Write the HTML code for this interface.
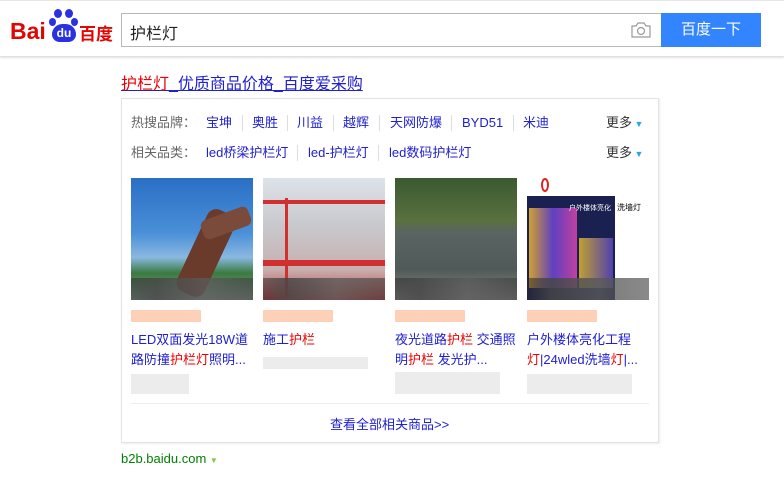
<!DOCTYPE html>
<html><head><meta charset="utf-8"><style>
*{margin:0;padding:0;box-sizing:border-box}
body{width:784px;height:477px;background:#fff;font-family:"Liberation Sans","Noto Sans CJK SC",sans-serif;position:relative;overflow:hidden;font-size:13px}
.hdr{position:absolute;left:0;top:0;width:784px;height:57px;border-top:1px solid #e6e6e6;border-bottom:1px solid #e0e0e0;box-shadow:0 1px 2px rgba(0,0,0,.12)}
.a{position:absolute;white-space:nowrap}
a{color:#2020d0;text-decoration:none;position:absolute;white-space:nowrap;line-height:18px;height:18px}
.red{color:#e00}
.img{position:absolute;top:178px;width:122px;height:122px;overflow:hidden}
.blur{position:absolute;left:0;top:100px;width:122px;height:22px;background:linear-gradient(90deg,rgba(40,40,40,.5),rgba(70,70,70,.85) 20%,rgba(90,90,90,.8) 60%,rgba(60,60,60,.6))}
.pk{position:absolute;top:310px;width:70px;height:12px;background:#ffd0b8}
.gr{position:absolute;height:20px;background:#ececec}
.t{position:absolute;top:330px;width:122px;font-size:13px;line-height:20px;color:#2020d0}
.s{position:absolute;width:1px;height:16px;background:#ddd}
</style></head><body>
<div class="hdr"></div>
<div class="a" style="left:10px;top:18px;font-size:23px;font-weight:bold;color:#e10602">Bai</div>
<div class="a" style="left:49px;top:9px;width:30px;height:34px">
<div class="a" style="left:5px;top:0;width:8px;height:9px;border-radius:50%;background:#2932e1"></div>
<div class="a" style="left:16px;top:0;width:8px;height:9px;border-radius:50%;background:#2932e1"></div>
<div class="a" style="left:0;top:9px;width:7px;height:8px;border-radius:50%;background:#2932e1"></div>
<div class="a" style="left:22px;top:9px;width:7px;height:8px;border-radius:50%;background:#2932e1"></div>
<div class="a" style="left:3px;top:15px;width:24px;height:18px;border-radius:11px 11px 8px 8px;background:#2932e1;color:#fff;font-size:12px;font-weight:bold;text-align:center;line-height:18px">du</div>
</div>
<div class="a" style="left:79px;top:20px;font-size:17px;font-weight:bold;color:#e10602">百度</div>
<div class="a" style="left:121px;top:13px;width:540px;height:34px;border:1px solid #b8b8b8;border-right:none"></div>
<div class="a" style="left:130px;top:20px;font-size:16px;color:#222">护栏灯</div>
<svg class="a" style="left:631px;top:22px" width="20" height="16" viewBox="0 0 20 16"><path d="M1 4h4l2-3h6l2 3h4v11H1z" fill="none" stroke="#9a9a9a" stroke-width="1.2"/><circle cx="10" cy="9" r="3.5" fill="none" stroke="#9a9a9a" stroke-width="1.2"/></svg>
<div class="a" style="left:661px;top:13px;width:100px;height:34px;background:#3385ff;color:#fff;font-size:15px;text-align:center;line-height:34px">百度一下</div>
<div class="a" style="left:121px;top:70px;font-size:16px;text-decoration:underline;color:#2020d0"><span class="red">护栏灯</span>_优质商品价格_百度爱采购</div>
<div class="a" style="left:121px;top:98px;width:538px;height:345px;border:1px solid #e3e3e3;box-shadow:1px 1px 2px rgba(0,0,0,.08)"></div>
<div class="a" style="left:131px;top:114px;color:#666;line-height:18px">热搜品牌：</div>
<a style="left:206px;top:114px">宝坤</a><div class="s" style="left:242px;top:115px"></div>
<a style="left:252px;top:114px">奥胜</a><div class="s" style="left:287px;top:115px"></div>
<a style="left:297px;top:114px">川益</a><div class="s" style="left:333px;top:115px"></div>
<a style="left:343px;top:114px">越辉</a><div class="s" style="left:379px;top:115px"></div>
<a style="left:390px;top:114px">天网防爆</a><div class="s" style="left:451px;top:115px"></div>
<a style="left:462px;top:114px;font-family:'Liberation Sans',sans-serif">BYD51</a><div class="s" style="left:513px;top:115px"></div>
<a style="left:523px;top:114px">米迪</a>
<div class="a" style="left:131px;top:144px;color:#666;line-height:18px">相关品类：</div>
<a style="left:206px;top:144px">led桥梁护栏灯</a><div class="s" style="left:297px;top:145px"></div>
<a style="left:308px;top:144px">led-护栏灯</a><div class="s" style="left:378px;top:145px"></div>
<a style="left:389px;top:144px">led数码护栏灯</a>
<div class="a" style="left:606px;top:114px;color:#333;line-height:18px">更多<span style="color:#2aa7e0;font-size:9px"> ▼</span></div>
<div class="a" style="left:606px;top:144px;color:#333;line-height:18px">更多<span style="color:#2aa7e0;font-size:9px"> ▼</span></div>

<div class="img" style="left:131px;background:linear-gradient(180deg,#2a6fc4 0%,#4a8fd8 45%,#8ab8e0 65%,#3a7a40 78%,#8a9a90 100%)"><div class="a" style="left:60px;top:30px;width:30px;height:90px;background:#6a3a2a;transform:rotate(25deg);border-radius:10px"></div><div class="a" style="left:70px;top:35px;width:50px;height:20px;background:#7a4a3a;transform:rotate(-20deg);border-radius:6px"></div><div class="blur"></div></div>
<div class="img" style="left:263px;background:linear-gradient(180deg,#dde3ea 0%,#c8c8cc 40%,#c8b0b0 75%,#c04040 100%)"><div class="a" style="left:0;top:22px;width:122px;height:4px;background:#d03030"></div><div class="a" style="left:22px;top:20px;width:3px;height:100px;background:#d03030"></div><div class="a" style="left:0;top:82px;width:122px;height:6px;background:#d03030"></div><div class="blur"></div></div>
<div class="img" style="left:395px;background:linear-gradient(180deg,#3a5a30 0%,#5a7040 35%,#5a6462 45%,#505a58 75%,#8a8a88 100%)"><div class="blur"></div></div>
<div class="img" style="left:527px;background:#fff"><div class="a" style="left:0;top:18px;width:88px;height:104px;background:#1a2050"></div><div class="a" style="left:2px;top:30px;width:48px;height:80px;background:linear-gradient(90deg,#d0a030,#6040c0,#c040a0)"></div><div class="a" style="left:52px;top:60px;width:34px;height:50px;background:linear-gradient(90deg,#c0a030,#5040b0)"></div><div class="a" style="left:42px;top:25px;font-size:7px;color:#fff">户外楼体亮化</div><div class="a" style="left:90px;top:24px;font-size:8px;color:#000">洗墙灯</div><div class="a" style="left:14px;top:0;width:8px;height:14px;border:2px solid #e02020;border-radius:50%"></div><div class="blur"></div></div>

<div class="pk" style="left:131px"></div><div class="pk" style="left:263px"></div><div class="pk" style="left:395px"></div><div class="pk" style="left:527px"></div>
<div class="t" style="left:131px">LED双面发光18W道路防撞<span class="red">护栏灯</span>照明...</div>
<div class="t" style="left:263px">施工<span class="red">护栏</span></div>
<div class="t" style="left:395px">夜光道路<span class="red">护栏</span> 交通照明<span class="red">护栏</span> 发光护...</div>
<div class="t" style="left:527px">户外楼体亮化工程<span class="red">灯</span>|24wled洗墙<span class="red">灯</span>|...</div>
<div class="gr" style="left:263px;top:357px;width:105px;height:12px"></div>
<div class="gr" style="left:131px;top:374px;width:58px"></div>
<div class="gr" style="left:395px;top:372px;width:105px;height:22px"></div>
<div class="gr" style="left:527px;top:374px;width:105px"></div>
<div class="a" style="left:131px;top:403px;width:518px;height:1px;background:#eee"></div>
<div class="a" style="left:330px;top:414px;color:#2020d0">查看全部相关商品>></div>
<div class="a" style="left:121px;top:451px;color:#008000;font-size:13px">b2b.baidu.com <span style="color:#8bc34a;font-size:8px">▼</span></div>
</body></html>
